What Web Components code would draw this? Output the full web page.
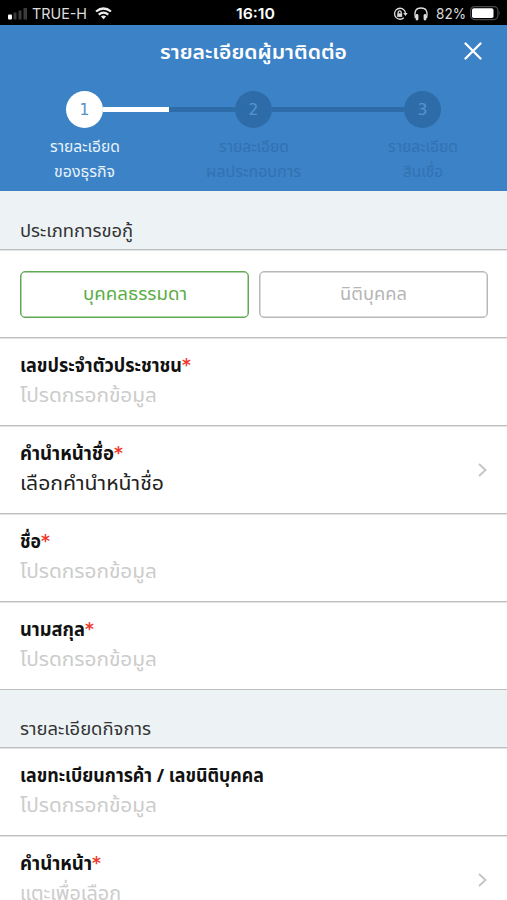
<!DOCTYPE html>
<html lang="th">
<head>
<meta charset="utf-8">
<title>รายละเอียดผู้มาติดต่อ</title>
<style>
html,body{margin:0;height:900px;overflow:hidden;background:#fff}
body{font-family:"Noto Sans","Noto Sans Thai","Prompt","Kanit","Liberation Sans",sans-serif;color:#111}
</style>
</head>
<body>
<loan-app></loan-app>
<script>
const make=(name,html,setup)=>customElements.define(name,class extends HTMLElement{
  connectedCallback(){
    if(!this.shadowRoot){this.attachShadow({mode:'open'}).innerHTML=html;}
    if(setup)setup(this,this.shadowRoot);
  }
});

/* Text scaled horizontally to a given width */
make('fit-text',`<style>
:host{display:block;white-space:nowrap;flex:none}
span{display:inline-block;transform-origin:0 50%}
</style><span><slot></slot></span>`,(h,r)=>{
  const s=r.querySelector('span'),w=+h.getAttribute('w');
  h.style.width=w+'px';
  const n=s.getBoundingClientRect().width;
  if(n)s.style.transform=`scaleX(${w/n})`;
});

make('status-bar',`<style>
:host{display:flex;height:25px;background:#000;color:#ddd;align-items:center;justify-content:space-between;padding:2px 6px 0 8px;box-sizing:border-box;font:15px/20px Inter,sans-serif}
div{display:flex;align-items:center;flex:1}
.r{justify-content:flex-end}
.t{flex:none;color:#fff;font-weight:600;margin-left:2px}
svg{display:block;flex:none}
</style>
<div><svg width="20" height="13" viewBox="0 0 20 13"><rect y="7.500" width="4" height="5" rx="1" fill="#fff"/><path d="M5.500 5.500h3v7h-3zM10.500 3.500h3v9h-3zM15.500 1h3.500v11.500h-3.500z" fill="#3b3b3b"/></svg>
<fit-text w="55" style="margin-left:4px">TRUE-H</fit-text>
<svg style="margin-left:8px" width="17" height="13" viewBox="0 0 17 13" fill="none" stroke="#eee" stroke-width="2.200"><path d="M1 4.500Q8.500-1.500 16 4.500M3.700 7.600Q8.500 3.700 13.300 7.600"/><path d="M5.900 9.400Q8.500 7.500 11.100 9.400L8.500 12.300z" fill="#eee" stroke="none"/></svg></div>
<fit-text class="t" w="39">16:10</fit-text>
<div class="r"><svg width="15" height="14" viewBox="0 0 15 14" fill="none" stroke="#ddd" stroke-width="1.300"><path d="M10.800 2.700A5.500 5.500 0 1 0 10.800 10.800M10.800 2.700Q12.300 4 12.400 6"/><path d="M10.200 6h4.400l-2.200 2.900z" fill="#ddd" stroke="none"/><path d="M4.200 6.300h5v3.600h-5z" fill="#ddd" stroke="none"/><path d="M5.200 6.500V5Q6.700 2.700 8.200 5v1.500"/></svg>
<svg style="margin-left:6px" width="14" height="14" viewBox="0 0 14 14" fill="none" stroke="#ddd"><path d="M1.500 11Q-.8 1 7 1t5.500 10" stroke-width="1.400"/><path d="M3 8.500v3.500M11 8.500v3.500" stroke-width="2.800" stroke-linecap="round"/></svg>
<fit-text w="30" style="margin-left:8px">82%</fit-text>
<svg style="margin-left:4px" width="31" height="15" viewBox="0 0 31 15"><rect x=".6" y=".6" width="27.300" height="13" rx="4" fill="none" stroke="#4a4a4a" stroke-width="1.200"/><rect x="2" y="2.200" width="21.500" height="9.800" rx="1.800" fill="#fff"/><path d="M29.200 5q1.600 2.300 0 4.600z" fill="#555"/></svg></div>`);

make('step-item',`<style>
:host{display:flex;flex-direction:column;align-items:center;width:169px;flex:none;color:#3272b2;--dot:#2e6ca9;--num:#5494cd;--l:#2e6ca9;--r:#2e6ca9}
:host([active]){color:#e6f2fc;--dot:#fff;--num:#5590cc;--l:transparent;--r:#fff}
:host([last]){--r:transparent}
.rail{display:flex;align-items:center;align-self:stretch;height:37px}
i{flex:1;height:5px;background:var(--l)}.b{background:var(--r)}
b{width:37px;height:37px;border-radius:50%;background:var(--dot);color:var(--num);font:400 15.500px/38px "DejaVu Sans",sans-serif;text-align:center}
.lab{margin-top:6px;display:flex;flex-direction:column;align-items:center;font-size:15.500px;line-height:25px}
</style><div class="rail"><i></i><b></b><i class="b"></i></div><div class="lab"><slot></slot></div>`,(h,r)=>{r.querySelector('b').textContent=h.getAttribute('n')});

make('page-header',`<style>
:host{display:flex;flex-direction:column;height:166px;background:#3c82c6;color:#fff;overflow:hidden}
.top{display:grid;grid-template-columns:1fr 187px 1fr;height:54px;align-items:center;font-size:20px;font-weight:600}
svg{justify-self:end;margin:0 25px 2px 0}
.steps{display:flex;margin:12px 0 0}
.top fit-text{margin-top:1px}
</style><div class="top"><span></span><fit-text w="187">รายละเอียดผู้มาติดต่อ</fit-text><svg width="18" height="18" viewBox="0 0 18 18"><path d="M1.500 1.500l15 15M16.500 1.500l-15 15" stroke="#fff" stroke-width="2.300" stroke-linecap="round"/></svg></div>
<div class="steps"><step-item n="1" active><fit-text w="70">รายละเอียด</fit-text><fit-text w="61">ของธุรกิจ</fit-text></step-item>
<step-item n="2"><fit-text w="70">รายละเอียด</fit-text><fit-text w="95">ผลประกอบการ</fit-text></step-item>
<step-item n="3" last><fit-text w="70">รายละเอียด</fit-text><fit-text w="40">สินเชื่อ</fit-text></step-item></div>`);

make('section-title',`<style>
:host{display:flex;align-items:flex-end;box-sizing:border-box;height:59px;padding:0 20px 5px;background:#edf2f5;border-bottom:1px solid #bcbec0;box-shadow:0 1px #e4e4e4;font-size:17.500px;line-height:28px;color:#333}
:host([compact]){height:58px}
</style><slot></slot>`);

make('choice-button',`<style>
:host{flex:1;display:flex;align-items:center;justify-content:center;box-sizing:border-box;height:47px;padding-bottom:1px;border:1px solid #b8b8b8;box-shadow:inset 0 0 0 .5px #b8b8b8;border-radius:5px;color:#b5b5b5;font-size:18.500px}
:host([selected]){border-color:#62a955;box-shadow:inset 0 0 0 .5px #62a955;color:#5bad46}
</style><slot></slot>`);

make('choice-row',`<style>
:host{display:flex;gap:10px;box-sizing:border-box;height:88px;padding:21px 19px 0 20px;border-bottom:1px solid #bebebe;box-shadow:0 1px #e4e4e4}
</style><slot></slot>`);

make('form-field',`<style>
:host{display:flex;align-items:center;box-sizing:border-box;height:88px;padding:0 19px 0 20px;border-bottom:1px solid #bebebe;box-shadow:0 1px #e4e4e4}
.body{flex:1;height:100%;box-sizing:border-box;padding-top:12px}
.label{display:flex;height:30px;line-height:30px;font-size:18.500px;font-weight:700;color:#111}
.label em{display:none;font:700 17px/31px "DejaVu Sans",sans-serif;color:#ee3a2c}
:host([required]) em{display:block}
.value{height:30px;line-height:30px;font-size:20px;color:#ccc}
:host([filled]) .value{color:#222}
svg{display:none;margin-top:1px}:host([arrow]) svg{display:block}
</style><div class="body"><div class="label"><slot name="label"></slot><em>*</em></div><div class="value"><slot></slot></div></div>
<svg width="11" height="16" viewBox="0 0 11 16"><path d="M2 2l6.500 6L2 14" fill="none" stroke="#c6c6c6" stroke-width="2"/></svg>`);

make('loan-app',`<style>:host{display:flex;flex-direction:column;width:507px;height:900px;overflow:hidden;background:#fff}:host>*{flex:none}</style>
<status-bar></status-bar><page-header></page-header>
<section-title><fit-text w="113">ประเภทการขอกู้</fit-text></section-title>
<choice-row><choice-button selected><fit-text w="104">บุคคลธรรมดา</fit-text></choice-button><choice-button><fit-text w="67">นิติบุคคล</fit-text></choice-button></choice-row>
<form-field required><fit-text slot="label" w="162">เลขประจำตัวประชาชน</fit-text><fit-text w="137">โปรดกรอกข้อมูล</fit-text></form-field>
<form-field required filled arrow><fit-text slot="label" w="94">คำนำหน้าชื่อ</fit-text><fit-text w="144">เลือกคำนำหน้าชื่อ</fit-text></form-field>
<form-field required><fit-text slot="label" w="21">ชื่อ</fit-text><fit-text w="137">โปรดกรอกข้อมูล</fit-text></form-field>
<form-field required><fit-text slot="label" w="65">นามสกุล</fit-text><fit-text w="137">โปรดกรอกข้อมูล</fit-text></form-field>
<section-title compact><fit-text w="131">รายละเอียดกิจการ</fit-text></section-title>
<form-field><fit-text slot="label" w="244">เลขทะเบียนการค้า / เลขนิติบุคคล</fit-text><fit-text w="137">โปรดกรอกข้อมูล</fit-text></form-field>
<form-field required arrow><fit-text slot="label" w="72">คำนำหน้า</fit-text><fit-text w="101">แตะเพื่อเลือก</fit-text></form-field>`);

/* Refit once every slotted text has its final font */
const refit=root=>{for(const e of root.querySelectorAll('*')){
  if(e.localName==='fit-text'){const s=e.shadowRoot.querySelector('span');s.style.transform='none';const n=s.getBoundingClientRect().width;if(n)s.style.transform=`scaleX(${e.getAttribute('w')/n})`;}
  else if(e.shadowRoot)refit(e.shadowRoot);
}};
refit(document);
</script>
</body>
</html>
